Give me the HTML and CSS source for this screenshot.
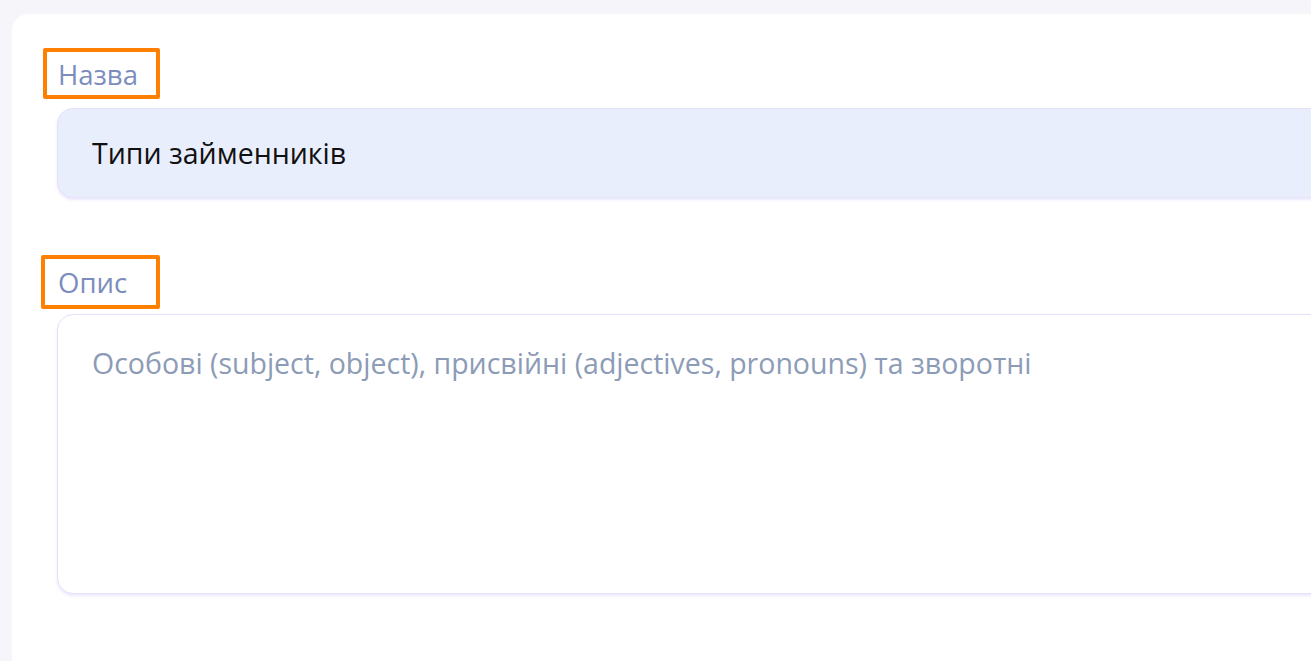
FILE: index.html
```html
<!DOCTYPE html>
<html lang="uk">
<head>
    <meta charset="UTF-8">
    <meta name="viewport" content="width=device-width, initial-scale=1.0">
    <title>Тема</title>
    <link rel="stylesheet" href="styles.css">
</head>
<body>
    <div class="card">
        <div class="field">
            <label class="field-label" for="title">Назва</label>
            <input class="field-input" type="text" id="title" value="Типи займенників">
        </div>
        <div class="field field-desc">
            <label class="field-label label-desc" for="desc">Опис</label>
            <textarea class="field-area" id="desc" placeholder="Особові (subject, object), присвійні (adjectives, pronouns) та зворотні"></textarea>
        </div>
    </div>
</body>
</html>
```

FILE: styles.css
```css
body {
    margin: 0;
    background-color: #f6f6fa;
    font-family: 'Open Sans', 'Noto Sans', sans-serif;
    overflow: hidden;
}
.card {
    box-sizing: border-box;
    height: calc(100vh - 14px);
    margin: 14px 0 0 12px;
    background: #ffffff;
    border-radius: 16px 0 0 0;
    padding: 34px 0 0 31px;
}
.field {
    display: flex;
    flex-direction: column;
    align-items: flex-start;
}
.field-desc {
    margin-top: 57px;
}
.field-label {
    box-sizing: border-box;
    width: 117px;
    height: 51px;
    border: 4px solid #ff8000;
    border-radius: 2px;
    padding: 7px 0 0 11px;
    font-size: 27.5px;
    line-height: 32px;
    color: #7c8dbd;
    margin-bottom: 9px;
}
.label-desc {
    width: 119px;
    height: 54px;
    margin-left: -2px;
    padding: 8px 0 0 13px;
    margin-bottom: 5px;
}
.field-input,
.field-area {
    box-sizing: border-box;
    margin-left: 14px;
    width: 1300px;
    border: 1px solid #e6e1fb;
    border-radius: 16px;
    box-shadow: 0 2px 3px rgba(196, 186, 245, 0.35);
    font-family: inherit;
    font-size: 28.5px;
    outline: none;
}
.field-input {
    height: 90px;
    padding: 0 34px;
    background-color: #e8eefc;
    color: #111111;
}
.field-area {
    height: 280px;
    padding: 28px 34px;
    background-color: #ffffff;
    line-height: 40px;
    resize: none;
}
.field-area::placeholder {
    color: #8c9bb6;
}
```
